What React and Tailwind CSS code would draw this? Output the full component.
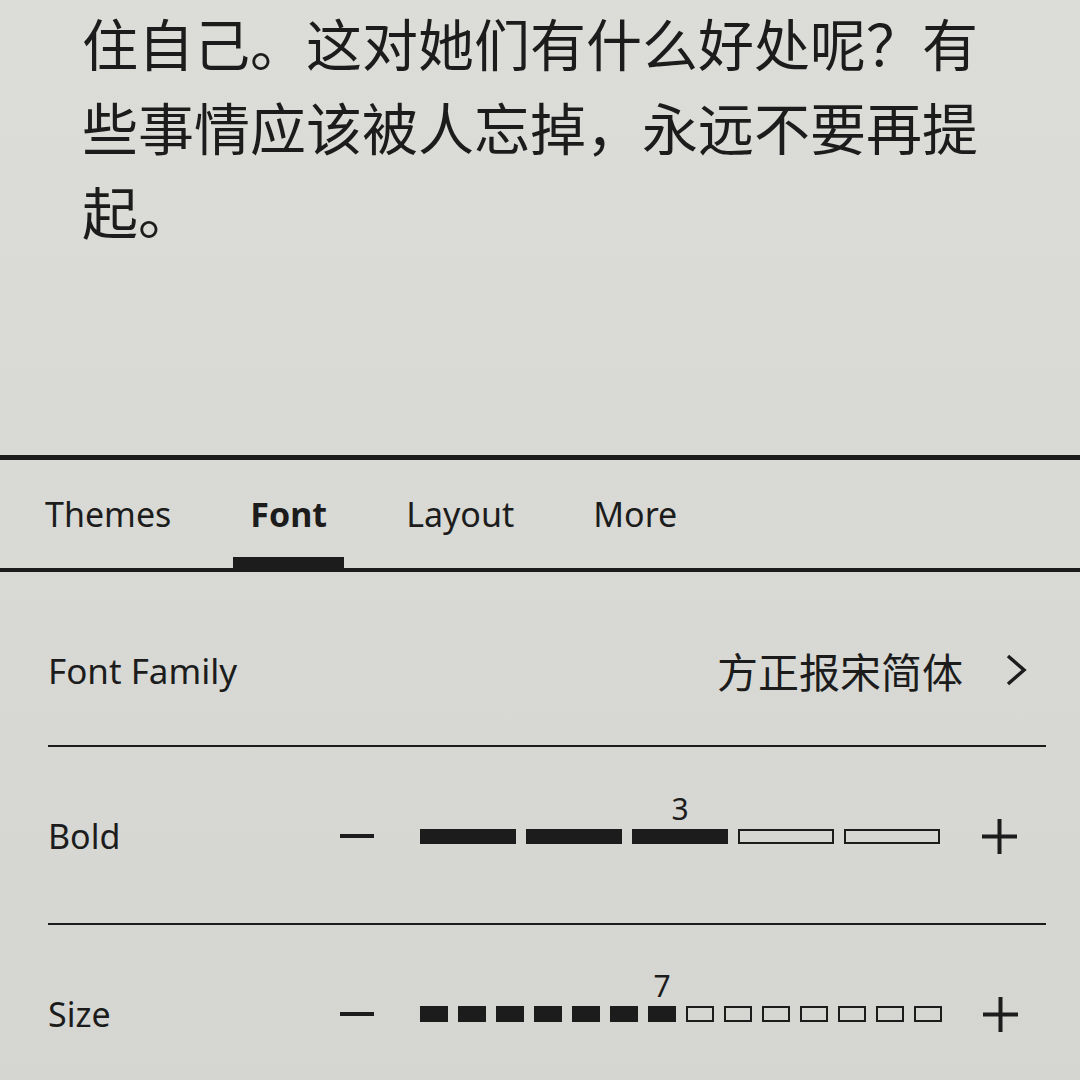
import React from 'react';

const tabs = ['Themes', 'Font', 'Layout', 'More'];

const Minus = () => <div className="w-[34px] h-[4px] bg-[#1c1c1c]" />;

const Plus = () => (
  <svg width="35" height="35" viewBox="0 0 35 35" className="text-[#1c1c1c]">
    <path d="M17.5 0V35M0 17.5H35" stroke="currentColor" strokeWidth="4" />
  </svg>
);

const Chevron = () => (
  <svg width="22" height="32" viewBox="0 0 22 32" className="text-[#1c1c1c]">
    <polyline points="3,2 19,16 3,30" fill="none" stroke="currentColor" strokeWidth="3.5" />
  </svg>
);

// one stepper: filled up to value, outline after, number over the current step
const Stepper = ({ steps, value, itemClass, gap }) => (
  <div className={`flex items-center ${gap}`}>
    {Array.from({ length: steps }, (_, i) => {
      const filled = i < value;
      return (
        <div key={i} className="relative">
          <div
            className={`${itemClass} border-[2px] border-[#1c1c1c] ${filled ? 'bg-[#1c1c1c]' : 'bg-transparent'}`}
          />
          {i === value - 1 && (
            <span className="absolute bottom-full left-1/2 -translate-x-1/2 mb-[5px] text-[30px] leading-none">
              {value}
            </span>
          )}
        </div>
      );
    })}
  </div>
);

const Divider = () => <div className="h-[2px] bg-[#1c1c1c]" />;

export default function App() {
  return (
    <div className="w-[1080px] h-[1080px] overflow-hidden bg-linear-to-b from-[#dcdcd8] to-[#d5d6d2] text-[#1c1c1c] font-['Noto_Sans','Noto_Sans_CJK_SC',sans-serif] flex flex-col">
      {/* reading page */}
      <div className="h-[455px] shrink-0 pl-[82px]">
        <p className="w-[904px] text-[56px] leading-[84px] font-['Noto_Sans_CJK_SC',sans-serif]">
          住自己。这对她们有什么好处呢？有些事情应该被人忘掉，永远不要再提起。
        </p>
      </div>

      {/* settings panel */}
      <div className="border-t-[5px] border-[#1c1c1c] flex flex-col">
        <div className="h-[108px] flex gap-[45px] pl-[28px]">
          {tabs.map((t) => {
            const active = t === 'Font';
            return (
              <div key={t} className="flex flex-col px-[17px]">
                <div
                  className={`flex-1 flex items-center pt-[11px] text-[34px] leading-none ${active ? 'font-bold' : 'font-normal'}`}
                >
                  {t}
                </div>
                <div className={`h-[11px] -mx-[17px] ${active ? 'bg-[#1c1c1c]' : ''}`} />
              </div>
            );
          })}
        </div>
        <div className="h-[4px] bg-[#1c1c1c]" />

        <div className="pl-[48px] pr-[34px] flex flex-col">
          <div className="h-[173px] pt-[23px] flex items-center">
            <span className="text-[35px] leading-none">Font Family</span>
            <div className="ml-auto mr-[19px] flex items-center gap-[42px]">
              <span className="text-[41px] leading-none font-['Noto_Sans_CJK_SC',sans-serif]">方正报宋简体</span>
              <Chevron />
            </div>
          </div>
          <Divider />

          <div className="h-[176px] pt-[2px] flex items-center">
            <span className="w-[292px] text-[34px] leading-none">Bold</span>
            <Minus />
            <div className="ml-[46px]">
              <Stepper steps={5} value={3} itemClass="w-[96px] h-[15px]" gap="gap-[10px]" />
            </div>
            <div className="ml-[42px]">
              <Plus />
            </div>
          </div>
          <Divider />

          <div className="h-[176px] pt-[2px] flex items-center">
            <span className="w-[292px] text-[34px] leading-none">Size</span>
            <Minus />
            <div className="ml-[46px]">
              <Stepper steps={14} value={7} itemClass="w-[28px] h-[16px]" gap="gap-[10px]" />
            </div>
            <div className="ml-[41px]">
              <Plus />
            </div>
          </div>
        </div>
      </div>
    </div>
  );
}
